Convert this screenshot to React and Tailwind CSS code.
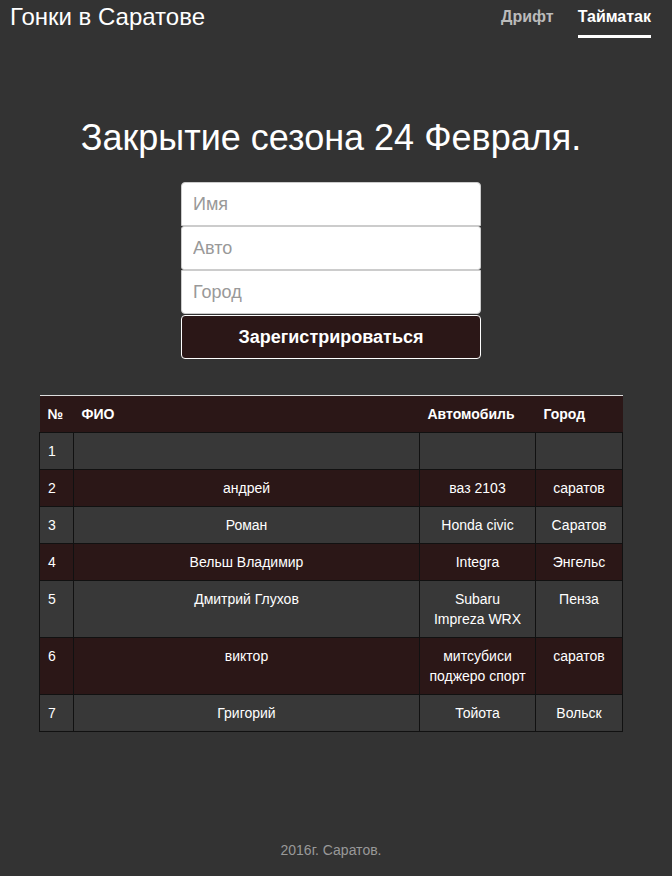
const rows = [
  { n: 1, name: "", car: "", city: "" },
  { n: 2, name: "андрей", car: "ваз 2103", city: "саратов" },
  { n: 3, name: "Роман", car: "Honda civic", city: "Саратов" },
  { n: 4, name: "Вельш Владимир", car: "Integra", city: "Энгельс" },
  { n: 5, name: "Дмитрий Глухов", car: "Subaru Impreza WRX", city: "Пенза" },
  { n: 6, name: "виктор", car: "митсубиси поджеро спорт", city: "саратов" },
  { n: 7, name: "Григорий", car: "Тойота", city: "Вольск" },
]

const App = () => {
  return (
    <div
      className="min-h-[876px] bg-[#333333] text-white"
      style={{ fontFamily: '"Liberation Sans", Arial, sans-serif' }}
    >
      {/* Header */}
      <div className="flex h-[40px] items-start justify-between pl-[10px] pr-[21px]">
        <h3 className="mt-[2px] text-[24px] leading-[30px]">Гонки в Саратове</h3>
        <nav className="flex gap-[24px] text-[16px] font-bold">
          <a className="mt-[5px] pb-[6px] text-[#bbbbbb]">Дрифт</a>
          <a className="mt-[5px] border-b-[3px] border-white pb-[6px]">Тайматак</a>
        </nav>
      </div>

      <div className="w-[662px]">
        {/* Heading */}
        <h1 className="mt-[76px] text-center text-[36px] leading-[44px]">
          Закрытие сезона 24 Февраля.
        </h1>

        {/* Form */}
        <form className="mx-auto mt-[22px] flex w-[300px] flex-col">
          <input
            placeholder="Имя"
            className="h-[44px] rounded-t-[4px] border border-[#cccccc] bg-white px-[11px] text-[18px] text-[#555] placeholder:text-[#999999]"
          />
          <input
            placeholder="Авто"
            className="h-[44px] rounded-[3px] border border-[#cccccc] bg-white px-[11px] text-[18px] text-[#555] placeholder:text-[#999999]"
          />
          <input
            placeholder="Город"
            className="h-[44px] rounded-b-[4px] border border-[#cccccc] bg-white px-[11px] text-[18px] text-[#555] placeholder:text-[#999999]"
          />
          <button
            type="button"
            className="mt-[1px] h-[44px] rounded-[4px] border border-white bg-[#2b1717] text-[18px] font-bold text-white"
          >
            Зарегистрироваться
          </button>
        </form>

        {/* Table */}
        <table className="mx-auto mt-[36px] w-[584px] border-collapse text-[14px] leading-[20px]">
          <thead>
            <tr className="border-t border-b border-t-[#dddddd] border-b-[#dddddd] bg-[#2b1717] text-left font-bold">
              <th className="w-[34px] px-[8px] py-[8px]">№</th>
              <th className="px-[8px] py-[8px]">ФИО</th>
              <th className="w-[116px] px-[8px] py-[8px]">Автомобиль</th>
              <th className="w-[87px] px-[8px] py-[8px]">Город</th>
            </tr>
          </thead>
          <tbody>
            {rows.map((r) => (
              <tr
                key={r.n}
                className={r.n % 2 === 0 ? "bg-[#2b1717]" : "bg-[#383838]"}
              >
                <td className="h-[37px] border border-[#111111] px-[8px] py-[8px] align-top">{r.n}</td>
                <td className="border border-[#111111] px-[8px] py-[8px] text-center align-top">{r.name}</td>
                <td className="border border-[#111111] px-[8px] py-[8px] text-center align-top">{r.car}</td>
                <td className="border border-[#111111] px-[8px] py-[8px] text-center align-top">{r.city}</td>
              </tr>
            ))}
          </tbody>
        </table>

        {/* Footer */}
        <p className="mt-[108px] text-center text-[14px] text-[#999999]">2016г. Саратов.</p>
      </div>
    </div>
  )
}

export default App
